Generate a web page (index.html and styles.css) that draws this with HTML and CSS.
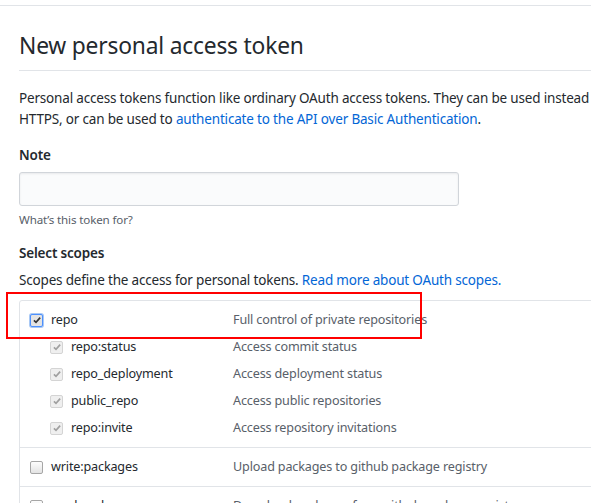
FILE: index.html
```html
<!DOCTYPE html>
<html lang="en">
<head>
<meta charset="utf-8">
<title>New personal access token</title>
<link rel="stylesheet" href="styles.css">
</head>
<body>
<div class="topbar"></div>
<main class="page">
  <h2 class="subhead">New personal access token</h2>
  <p class="intro">Personal access tokens function like ordinary OAuth access tokens. They can be used instead of a password for Git over<br>HTTPS, or can be used to <a href="#">authenticate to the API over Basic Authentication</a>.</p>

  <dl class="form-group">
    <dt><label class="label">Note</label></dt>
    <dd>
      <input class="input" type="text" aria-label="Note">
      <p class="note">What’s this token for?</p>
    </dd>
  </dl>

  <h3 class="label scopes-title">Select scopes</h3>
  <p class="scopes-desc">Scopes define the access for personal tokens. <a href="#">Read more about OAuth scopes.</a></p>

  <div class="scopes">
    <div class="group">
      <div class="row">
        <span class="scope"><span class="cb cb-focus"><svg viewBox="0 0 12 12"><path d="M2.3 6.4 4.8 8.8 9.8 3.2" /></svg></span><span class="name">repo</span></span>
        <span class="desc">Full control of private repositories</span>
      </div>
      <div class="row sub">
        <span class="scope"><span class="cb cb-dis"><svg viewBox="0 0 12 12"><path d="M2.3 6.4 4.8 8.8 9.8 3.2" /></svg></span><span class="name">repo:status</span></span>
        <span class="desc">Access commit status</span>
      </div>
      <div class="row sub">
        <span class="scope"><span class="cb cb-dis"><svg viewBox="0 0 12 12"><path d="M2.3 6.4 4.8 8.8 9.8 3.2" /></svg></span><span class="name">repo_deployment</span></span>
        <span class="desc">Access deployment status</span>
      </div>
      <div class="row sub">
        <span class="scope"><span class="cb cb-dis"><svg viewBox="0 0 12 12"><path d="M2.3 6.4 4.8 8.8 9.8 3.2" /></svg></span><span class="name">public_repo</span></span>
        <span class="desc">Access public repositories</span>
      </div>
      <div class="row sub">
        <span class="scope"><span class="cb cb-dis"><svg viewBox="0 0 12 12"><path d="M2.3 6.4 4.8 8.8 9.8 3.2" /></svg></span><span class="name">repo:invite</span></span>
        <span class="desc">Access repository invitations</span>
      </div>
    </div>
    <div class="group">
      <div class="row">
        <span class="scope"><span class="cb"></span><span class="name">write:packages</span></span>
        <span class="desc">Upload packages to github package registry</span>
      </div>
    </div>
    <div class="group">
      <div class="row">
        <span class="scope"><span class="cb"></span><span class="name">read:packages</span></span>
        <span class="desc">Download packages from github package registry</span>
      </div>
    </div>
  </div>

  <div class="highlight" aria-hidden="true"></div>
</main>
</body>
</html>
```

FILE: styles.css
```css
html, body {
  margin: 0;
  padding: 0;
  background: #fff;
  overflow: hidden;
}

body {
  font-family: "Noto Sans", "Open Sans", "DejaVu Sans", sans-serif;
  font-size: 13.5px;
  letter-spacing: -0.18px;
  line-height: 1.5;
  color: #24292e;
  width: 591px;
  height: 503px;
  position: relative;
}

a {
  color: #0366d6;
  text-decoration: none;
}

.topbar {
  height: 5px;
  border-bottom: 1px solid #e1e4e8;
}

.page {
  padding-left: 19px;
  width: 760px;
}

.subhead {
  margin: 24px 0 0;
  padding-bottom: 8px;
  font-size: 22.8px;
  letter-spacing: -0.2px;
  font-weight: 400;
  line-height: 32px;
  border-bottom: 1px solid #e1e4e8;
}

.intro {
  margin: 17px 0 0;
  line-height: 21px;
  white-space: nowrap;
}

.form-group {
  margin: 15px 0 0;
}

.form-group dd {
  margin: 0;
}

.label {
  font-weight: 600;
  font-size: 13.5px;
}

.form-group dt {
  line-height: 21px;
  margin-bottom: 6px;
}

.input {
  display: block;
  box-sizing: border-box;
  width: 440px;
  height: 34px;
  margin: 0;
  padding: 6px 8px;
  background: #fafbfc;
  border: 1px solid #d1d5da;
  border-radius: 3px;
  box-shadow: inset 0 1px 2px rgba(27, 31, 35, 0.075);
  font: inherit;
}

.note {
  margin: 5px 0 0;
  font-size: 11.6px;
  letter-spacing: -0.15px;
  line-height: 18px;
  color: #586069;
}

.scopes-title {
  margin: 14px 0 0;
  line-height: 21px;
}

.scopes-desc {
  margin: 6px 0 0;
  line-height: 21px;
}

.scopes {
  margin-top: 9px;
  border: 1px solid #e1e4e8;
  border-radius: 3px;
  width: 700px;
  font-size: 12.6px;
  letter-spacing: -0.15px;
}

.group {
  padding: 6px 0 5px;
}

.group + .group {
  border-top: 1px solid #e1e4e8;
}

.row {
  display: flex;
  align-items: center;
  height: 27px;
}

.scope {
  display: flex;
  align-items: center;
  box-sizing: border-box;
  width: 213px;
  padding-left: 10px;
  flex: none;
}

.row.sub .scope {
  padding-left: 30px;
}

.cb {
  box-sizing: border-box;
  width: 13px;
  height: 13px;
  border: 1px solid #a6a6a6;
  border-radius: 2px;
  background: linear-gradient(#fdfdfd, #e3e3e3);
  margin-right: 8px;
  flex: none;
  display: flex;
  align-items: center;
  justify-content: center;
}

.cb svg {
  width: 10px;
  height: 10px;
  fill: none;
  stroke: #333;
  stroke-width: 2;
}

.cb-focus {
  border-color: #4d90fe;
  box-shadow: 0 0 0 1px #a9c9f5;
  background: #e4e4e4;
}

.cb-dis {
  border-color: #d4d4d4;
  background: #efefef;
}

.cb-dis svg {
  stroke: #a0a0a0;
}

.name {
  color: #24292e;
}

.desc {
  color: #586069;
}

.highlight {
  position: absolute;
  left: 6px;
  top: 292px;
  width: 416px;
  height: 47px;
  box-sizing: border-box;
  border: 2px solid #f00;
}
```
